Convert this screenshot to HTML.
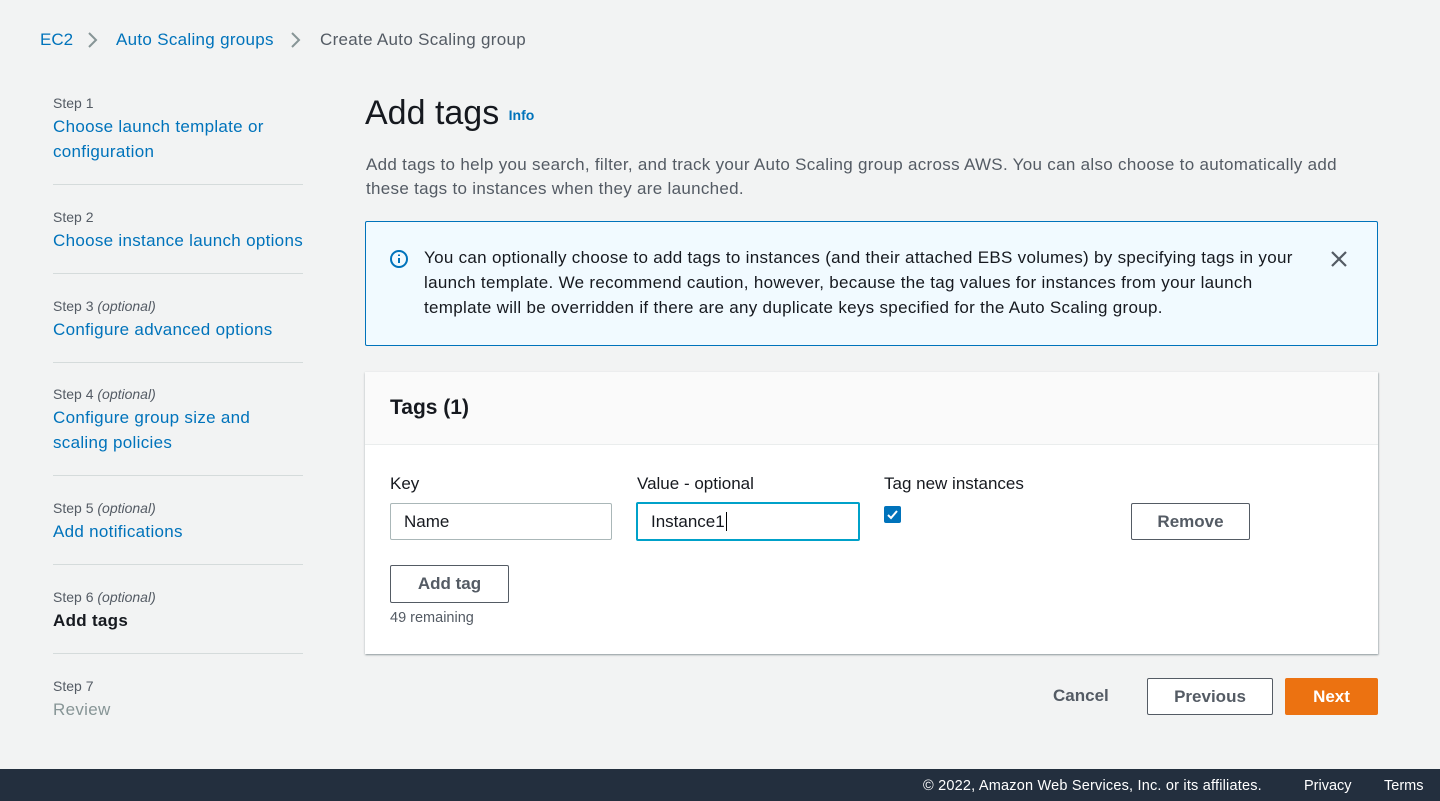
<!DOCTYPE html>
<html><head><meta charset="utf-8"><style>
*{box-sizing:border-box;margin:0;padding:0}
body{width:1440px;height:801px;background:#f2f3f3;font-family:"Liberation Sans",sans-serif;color:#16191f;position:relative;overflow:hidden;font-size:16px}
.a{position:absolute;white-space:nowrap}
.link{color:#0073bb}
.step{font-size:14px;color:#545b64}
.step i{font-style:italic}
.nav{font-size:17px;color:#0073bb;line-height:25px;letter-spacing:0.3px}
.hr{position:absolute;left:53px;width:250px;height:1px;background:#d5dbdb}
.btn{position:absolute;border:1px solid #545b64;background:#fff;border-radius:2px;font-weight:bold;color:#545b64;font-size:16px;text-align:center}
.inp{position:absolute;border:1px solid #aab7b8;background:#fff;border-radius:2px;height:37px;font-size:16px;padding:8px 13px}
</style></head><body>
<div class="a" style="left:40px;top:30px;font-size:17px"><span class="link">EC2</span></div>
<svg class="a" style="left:86px;top:31px" width="14" height="18"><path d="M3 2l7 7-7 7" stroke="#879596" stroke-width="2" fill="none"/></svg>
<div class="a link" style="left:116px;top:30px;font-size:17px;letter-spacing:0.3px">Auto Scaling groups</div>
<svg class="a" style="left:289px;top:31px" width="14" height="18"><path d="M3 2l7 7-7 7" stroke="#879596" stroke-width="2" fill="none"/></svg>
<div class="a" style="left:320px;top:30px;font-size:17px;color:#545b64;letter-spacing:0.3px">Create Auto Scaling group</div>

<div class="a step" style="left:53px;top:95px">Step 1</div>
<div class="a nav" style="left:53px;top:114px">Choose launch template or<br>configuration</div>
<div class="hr" style="top:184px"></div>
<div class="a step" style="left:53px;top:209px">Step 2</div>
<div class="a nav" style="left:53px;top:228px">Choose instance launch options</div>
<div class="hr" style="top:273px"></div>
<div class="a step" style="left:53px;top:298px">Step 3 <i>(optional)</i></div>
<div class="a nav" style="left:53px;top:317px">Configure advanced options</div>
<div class="hr" style="top:362px"></div>
<div class="a step" style="left:53px;top:386px">Step 4 <i>(optional)</i></div>
<div class="a nav" style="left:53px;top:405px">Configure group size and<br>scaling policies</div>
<div class="hr" style="top:475px"></div>
<div class="a step" style="left:53px;top:500px">Step 5 <i>(optional)</i></div>
<div class="a nav" style="left:53px;top:519px">Add notifications</div>
<div class="hr" style="top:564px"></div>
<div class="a step" style="left:53px;top:589px">Step 6 <i>(optional)</i></div>
<div class="a nav" style="left:53px;top:608px;color:#16191f;font-weight:bold">Add tags</div>
<div class="hr" style="top:653px"></div>
<div class="a step" style="left:53px;top:678px">Step 7</div>
<div class="a nav" style="left:53px;top:697px;color:#879596">Review</div>

<div class="a" style="left:365px;top:94px;font-size:34px">Add tags <span style="font-size:14px;font-weight:bold;color:#0073bb;vertical-align:middle">Info</span></div>
<div class="a" style="left:366px;top:153px;font-size:17px;line-height:24px;color:#545b64;letter-spacing:0.3px">Add tags to help you search, filter, and track your Auto Scaling group across AWS. You can also choose to automatically add<br>these tags to instances when they are launched.</div>

<div class="a" style="left:365px;top:221px;width:1013px;height:125px;background:#f1faff;border:1px solid #0073bb;border-radius:2px"></div>
<svg class="a" style="left:389px;top:249px" width="20" height="20"><circle cx="10" cy="10" r="8" stroke="#0073bb" stroke-width="2" fill="none"/><path d="M10 9v5M10 5.5v1.5" stroke="#0073bb" stroke-width="2"/></svg>
<div class="a" style="left:424px;top:245px;font-size:17px;line-height:25px;letter-spacing:0.3px">You can optionally choose to add tags to instances (and their attached EBS volumes) by specifying tags in your<br>launch template. We recommend caution, however, because the tag values for instances from your launch<br>template will be overridden if there are any duplicate keys specified for the Auto Scaling group.</div>
<svg class="a" style="left:1329px;top:249px" width="20" height="20"><path d="M3 3l14 14M17 3L3 17" stroke="#545b64" stroke-width="2.2"/></svg>

<div class="a" style="left:365px;top:372px;width:1013px;height:282px;background:#fff;box-shadow:0 1px 2px rgba(0,28,36,.3),1px 1px 1px rgba(0,28,36,.15)"></div>
<div class="a" style="left:365px;top:372px;width:1013px;height:73px;background:#fafafa;border-bottom:1px solid #eaeded"></div>
<div class="a" style="left:390px;top:396px;font-size:21px;font-weight:bold">Tags (1)</div>
<div class="a" style="left:390px;top:474px;font-size:17px">Key</div>
<div class="a" style="left:637px;top:474px;font-size:17px">Value - optional</div>
<div class="a" style="left:884px;top:474px;font-size:17px">Tag new instances</div>
<div class="inp" style="left:390px;top:503px;width:222px;font-size:17px">Name</div>
<div class="inp" style="left:636px;top:502px;width:224px;height:39px;border:2px solid #00a1c9;font-size:17px">Instance1<span style="border-left:1px solid #000;margin-left:1px"></span></div>
<div class="a" style="left:884px;top:506px;width:17px;height:17px;background:#0073bb;border-radius:2px"></div>
<svg class="a" style="left:884px;top:506px" width="17" height="17"><path d="M4 9l3 3 6-7" stroke="#fff" stroke-width="2" fill="none"/></svg>
<div class="btn" style="left:1131px;top:503px;width:119px;height:37px;line-height:35px;font-size:17px">Remove</div>
<div class="btn" style="left:390px;top:565px;width:119px;height:38px;line-height:36px;font-size:17px">Add tag</div>
<div class="a" style="left:390px;top:610px;font-size:14.5px;color:#545b64">49 remaining</div>

<div class="a" style="left:1053px;top:686px;font-weight:bold;color:#545b64;font-size:17px">Cancel</div>
<div class="btn" style="left:1147px;top:678px;width:126px;height:37px;line-height:35px;font-size:17px">Previous</div>
<div class="btn" style="left:1285px;top:678px;width:93px;height:37px;line-height:35px;font-size:17px;background:#ec7211;border-color:#ec7211;color:#fff">Next</div>

<div class="a" style="left:0;top:769px;width:1440px;height:32px;background:#232f3e"></div>
<div class="a" style="left:923px;top:778px;font-size:14.5px;color:#fff;letter-spacing:0.2px">© 2022, Amazon Web Services, Inc. or its affiliates.</div>
<div class="a" style="left:1304px;top:778px;font-size:14.5px;color:#fff">Privacy</div>
<div class="a" style="left:1384px;top:778px;font-size:14.5px;color:#fff">Terms</div>
</body></html>
